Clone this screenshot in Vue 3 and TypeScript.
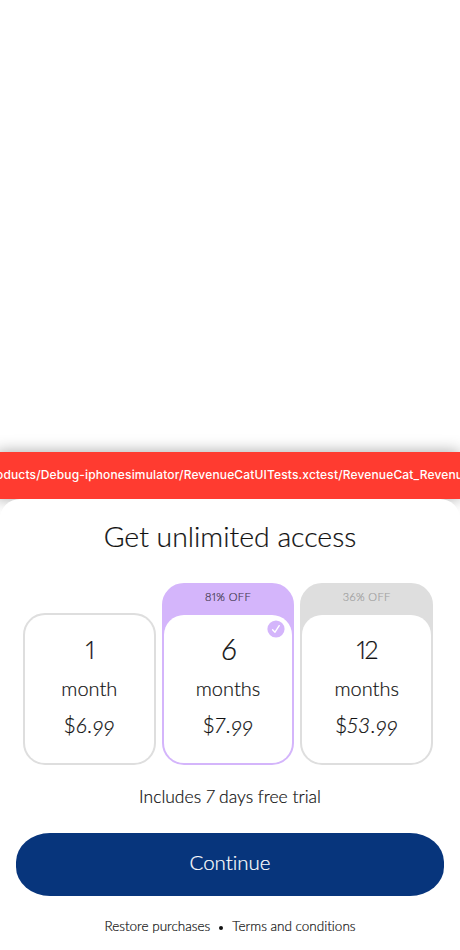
<script setup lang="ts">
interface Plan {
  count: string
  unit: string
  amount: string
  cents: string
  discount?: string
  selected?: boolean
}

const plans: Plan[] = [
  { count: '1', unit: 'month', amount: '6', cents: '99' },
  { count: '6', unit: 'months', amount: '7', cents: '99', discount: '81% OFF', selected: true },
  { count: '12', unit: 'months', amount: '53', cents: '99', discount: '36% OFF' },
]
</script>

<template>
  <main class="screen">
    <div class="warning">oducts/Debug-iphonesimulator/RevenueCatUITests.xctest/RevenueCat_Revenu</div>
    <section class="sheet">
      <h1 class="title">Get unlimited access</h1>
      <div class="plans">
        <div
          v-for="plan in plans"
          :key="plan.count"
          class="plan"
          :class="{ selected: plan.selected }"
        >
          <div v-if="plan.discount" class="discount"><span>{{ plan.discount }}</span></div>
          <div class="body">
            <svg v-if="plan.selected" class="check" viewBox="0 0 18 18">
              <circle cx="9" cy="9" r="8.6" />
              <path d="M5.6 9.7 8 12.2 12.2 5.7" />
            </svg>
            <span class="count" :class="{ slanted: plan.count === '6' }">{{ plan.count }}</span>
            <span class="unit">{{ plan.unit }}</span>
            <span class="price">$<i>{{ plan.amount }}</i>.<i class="low">{{ plan.cents }}</i></span>
          </div>
        </div>
      </div>
      <p class="offer">Includes <i>7</i> days free trial</p>
      <button class="continue"><span>Continue</span></button>
      <footer class="links">
        <span class="restore">Restore purchases</span>
        <span class="dot"></span>
        <span class="terms">Terms and conditions</span>
      </footer>
    </section>
  </main>
</template>

<style>
body {
  background: #fff;
}
</style>

<style scoped>
.screen {
  box-sizing: border-box;
  width: 460px;
  height: 950px;
  padding-top: 452px;
  overflow: hidden;
  background: #fff;
  color: #111;
  font-family: Papyrus, Lato, sans-serif;
  font-weight: 300;
  font-variant-ligatures: none;
  font-variant-numeric: proportional-nums;
  -webkit-text-stroke: 0.2px currentColor;
  white-space: nowrap;
}
.warning {
  height: 47px;
  line-height: 46px;
  margin-left: -4px;
  background: #ff3b30;
  box-shadow: 0 0 16px rgba(0, 0, 0, 0.36);
  color: #fff;
  font-family: Inter, sans-serif;
  font-size: 12px;
  font-weight: 500;
  letter-spacing: 0.15px;
  -webkit-text-stroke: 0;
}
.sheet {
  position: relative;
  box-sizing: border-box;
  height: 451px;
  display: flex;
  flex-direction: column;
  align-items: center;
  border-radius: 20px 20px 0 0;
  background: #fff;
}
.sheet > * {
  flex-shrink: 0;
}
.title {
  margin: 0;
  height: 84px;
  line-height: 74px;
  font-size: 28.4px;
  font-weight: 300;
}
.plans {
  display: flex;
  align-items: flex-end;
  gap: 6px;
  width: 410px;
  height: 182px;
  margin-right: 4px;
}
.plan {
  --accent: #dedede;
  flex: 1;
  box-sizing: border-box;
  border: 2px solid var(--accent);
  border-radius: 22px;
  background: var(--accent);
}
.plan.selected {
  --accent: #d4b5fb;
}
.discount {
  height: 30px;
  line-height: 24px;
  text-align: center;
  font-size: 11px;
  letter-spacing: 0.4px;
  color: #a0a0a0;
}
.selected .discount {
  color: #40364b;
}
.body {
  position: relative;
  display: flex;
  flex-direction: column;
  align-items: center;
  box-sizing: border-box;
  height: 148px;
  padding-top: 14px;
  border-radius: 20px;
  background: #fff;
}
.check {
  position: absolute;
  top: 5px;
  right: 7px;
  width: 18px;
  height: 18px;
}
.check circle {
  fill: #d4b5fb;
}
.check path {
  fill: none;
  stroke: #fff;
  stroke-width: 1.4;
  stroke-linecap: round;
  stroke-linejoin: round;
}
.count {
  height: 40px;
  line-height: 40px;
  font-size: 25px;
  letter-spacing: -1.5px;
}
.slanted {
  font-size: 30px;
  line-height: 38px;
  font-style: italic;
}
.unit {
  height: 38px;
  line-height: 38px;
  font-size: 20px;
}
.price {
  height: 38px;
  line-height: 36px;
  font-size: 21px;
  letter-spacing: 0.6px;
}
.low {
  display: inline-block;
  line-height: 20px;
  vertical-align: -3px;
}
.offer {
  margin: 0;
  height: 68px;
  line-height: 63px;
  font-size: 17.5px;
}
.continue {
  box-sizing: border-box;
  width: 428px;
  height: 63px;
  padding: 0 0 6px;
  border: 0;
  border-radius: 34px / 29px;
  background: #07357c;
  color: #fff;
  font: inherit;
  font-size: 20.5px;
}
.links {
  display: flex;
  align-items: center;
  height: 60px;
  gap: 9px;
  font-size: 13.5px;
}
.links span:not(.dot) {
  padding-bottom: 1px;
}
.dot {
  width: 4px;
  height: 4px;
  margin-top: 3px;
  border-radius: 50%;
  background: #111;
}
</style>
